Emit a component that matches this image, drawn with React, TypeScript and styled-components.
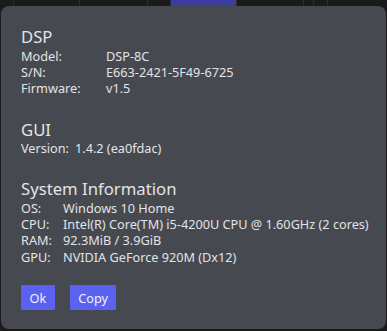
import styled, { createGlobalStyle } from 'styled-components'

const GlobalStyle = createGlobalStyle`
  html, body {
    margin: 0;
    padding: 0;
    background: #1b1b1e;
    font-family: "Noto Sans", "Open Sans", sans-serif;
  }
`

const Page = styled.div`
  position: relative;
  width: 387px;
  height: 331px;
  overflow: hidden;
  background: #1b1b1e;
`

const TabStrip = styled.div`
  display: flex;
  height: 20px;
`

const Tab = styled.div<{ $w: number; $active?: boolean }>`
  width: ${p => p.$w}px;
  flex-shrink: 0;
  box-sizing: border-box;
  background: ${p => (p.$active ? '#3a3d9c' : '#1b1b1e')};
  border-right: 1px solid #2c2c30;
`

const Dialog = styled.div`
  position: absolute;
  top: 6px;
  left: 1px;
  width: 385px;
  height: 323px;
  box-sizing: border-box;
  background: #464950;
  border-radius: 8px;
  padding: 20.5px 20px 0 20px;
  color: #e2e3e6;
  display: flex;
  flex-direction: column;
`

const Section = styled.section`
  margin-bottom: 23px;
`

const Heading = styled.h2<{ $space: number }>`
  margin: 0 0 ${p => p.$space}px;
  font-size: 16.7px;
  font-weight: 400;
  line-height: 20px;
`

const InfoGrid = styled.div<{ $labelWidth: number }>`
  display: grid;
  grid-template-columns: ${p => p.$labelWidth}px 1fr;
  grid-auto-rows: 16.3px;
  font-size: 12.7px;
  line-height: 16.3px;
`

const Label = styled.div`
  white-space: nowrap;
`

const Value = styled.div`
  white-space: nowrap;
`

const Buttons = styled.div`
  display: flex;
  gap: 15px;
  margin-top: -2.6px;
`

const Button = styled.button`
  font-family: "Noto Sans", "Open Sans", sans-serif;
  font-size: 12.7px;
  color: #eef0ff;
  background: #5b62f0;
  border: none;
  border-radius: 1px;
  height: 25px;
  padding: 0 8.5px;
  cursor: pointer;
`

type Row = [string, string]

const dsp: Row[] = [
  ['Model:', 'DSP-8C'],
  ['S/N:', 'E663-2421-5F49-6725'],
  ['Firmware:', 'v1.5'],
]

const gui: Row[] = [['Version:', '1.4.2 (ea0fdac)']]

const sys: Row[] = [
  ['OS:', 'Windows 10 Home'],
  ['CPU:', 'Intel(R) Core(TM) i5-4200U CPU @ 1.60GHz (2 cores)'],
  ['RAM:', '92.3MiB / 3.9GiB'],
  ['GPU:', 'NVIDIA GeForce 920M (Dx12)'],
]

function Info({ title, rows, labelWidth, space = 0 }: { title: string; rows: Row[]; labelWidth: number; space?: number }) {
  return (
    <Section>
      <Heading $space={space}>{title}</Heading>
      <InfoGrid $labelWidth={labelWidth}>
        {rows.flatMap(([l, v]) => [
          <Label key={l}>{l}</Label>,
          <Value key={l + 'v'}>{v}</Value>,
        ])}
      </InfoGrid>
    </Section>
  )
}

export default function App() {
  return (
    <>
      <GlobalStyle />
      <Page>
        <TabStrip>
          <Tab $w={14} />
          <Tab $w={66} />
          <Tab $w={68} />
          <Tab $w={23} />
          <Tab $w={66} $active />
          <Tab $w={67} />
          <Tab $w={10} />
          <Tab $w={14} />
          <Tab $w={60} />
        </TabStrip>
        <Dialog>
          <Info title="DSP" rows={dsp} labelWidth={85} space={1.4} />
          <Info title="GUI" rows={gui} labelWidth={54} />
          <Info title="System Information" rows={sys} labelWidth={42} space={0.6} />
          <Buttons>
            <Button>Ok</Button>
            <Button>Copy</Button>
          </Buttons>
        </Dialog>
      </Page>
    </>
  )
}
